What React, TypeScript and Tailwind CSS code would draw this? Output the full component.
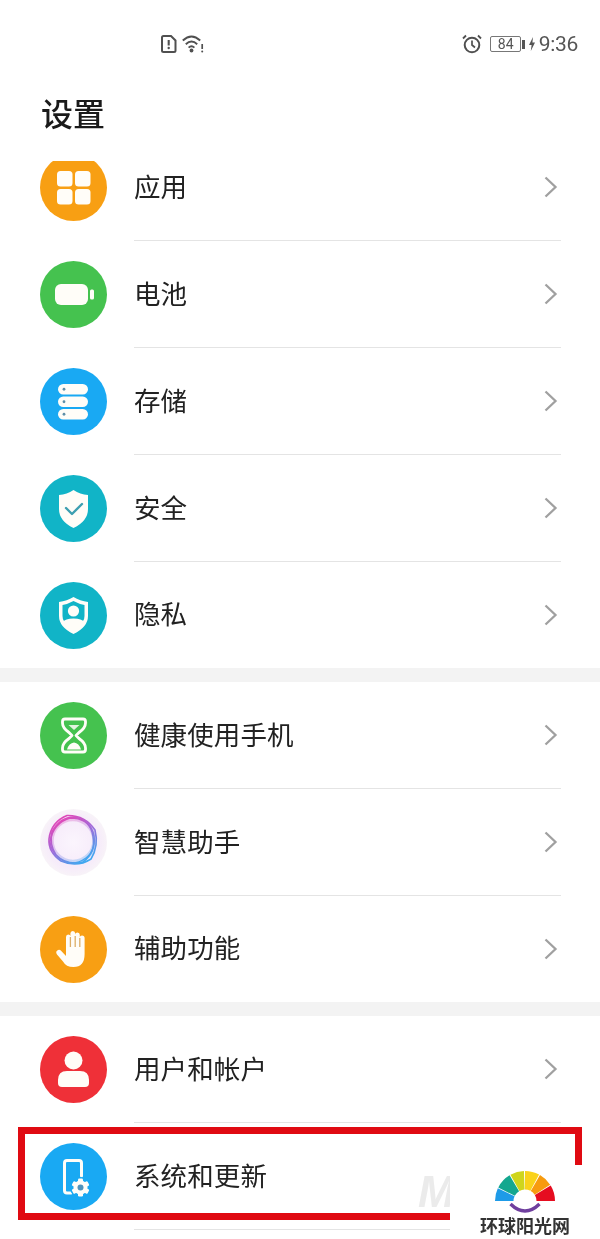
import type { ReactNode } from 'react'

const W = '#fffdf8'

function Circle({ bg, children }: { bg: string; children: ReactNode }) {
  return (
    <svg width="67" height="67" viewBox="0 0 67 67" className="shrink-0">
      <circle cx="33.5" cy="33.5" r="33.5" fill={bg} />
      {children}
    </svg>
  )
}

const AppsIcon = () => (
  <Circle bg="#f89f13">
    <rect x="17" y="17" width="15.5" height="15.5" rx="3.5" fill={W} />
    <rect x="35" y="17" width="15.5" height="15.5" rx="3.5" fill={W} />
    <rect x="17" y="35" width="15.5" height="15.5" rx="3.5" fill={W} />
    <rect x="35" y="35" width="15.5" height="15.5" rx="3.5" fill={W} />
  </Circle>
)

const BatteryIcon = () => (
  <Circle bg="#45c24f">
    <rect x="15" y="23" width="33" height="21" rx="6" fill={W} />
    <rect x="50" y="28.5" width="4" height="10" rx="1.5" fill={W} />
  </Circle>
)

const StorageIcon = () => (
  <Circle bg="#19a9f3">
    {[16, 28.5, 41].map(y => (
      <g key={y}>
        <rect x="18" y={y} width="30" height="10.5" rx="5.25" fill={W} />
        <circle cx="24" cy={y + 5.25} r="1.4" fill="#5f8fa8" />
      </g>
    ))}
  </Circle>
)

const SafetyIcon = () => (
  <Circle bg="#11b4c7">
    <path d="M33.5 15 Q40 19.5 48 20 V34 Q48 46 33.5 53 Q19 46 19 34 V20 Q27 19.5 33.5 15Z" fill={W} />
    <path d="M26 33 L32 39 L42 29" fill="none" stroke="#3d9fb0" strokeWidth="2.4" strokeLinecap="round" strokeLinejoin="round" />
  </Circle>
)

const PrivacyIcon = () => (
  <Circle bg="#11b4c7">
    <path d="M33.5 15 Q40 19 48 20 V34 Q48 45 33.5 52 Q19 45 19 34 V20 Q27 19 33.5 15Z" fill={W} />
    <path d="M33.5 19 Q39 22 44.5 23 V34 Q44.5 37 43 39 L24 39 Q22.5 37 22.5 34 V23 Q28 22 33.5 19Z" fill="#11b4c7" />
    <circle cx="33.5" cy="29" r="5.6" fill={W} />
    <path d="M23 40 Q25 36.5 33.5 36.5 Q42 36.5 44 40 Q41 45 33.5 48.5 Q26 45 23 40Z" fill={W} />
  </Circle>
)

const HourglassIcon = () => (
  <Circle bg="#45c24f">
    <path
      d="M25 17 H43 Q45.5 17 45.5 19.5 V21 Q45.5 26 39 30.5 L36 33.5 L39 36.5 Q45.5 41 45.5 46 V47.5 Q45.5 50 43 50 H25 Q22.5 50 22.5 47.5 V46 Q22.5 41 29 36.5 L32 33.5 L29 30.5 Q22.5 26 22.5 21 V19.5 Q22.5 17 25 17Z"
      fill="none"
      stroke={W}
      strokeWidth="2.8"
      strokeLinejoin="round"
    />
    <path d="M28.5 23 H39.5 L34 28Z" fill={W} opacity="0.85" />
    <path d="M27 47.5 Q29 41 34 40.5 Q39 41 41 47.5Z" fill={W} />
  </Circle>
)

const AssistantIcon = () => (
  <svg width="67" height="67" viewBox="0 0 67 67" className="shrink-0">
    <defs>
      <radialGradient id="asBg">
        <stop offset="0" stopColor="#fbf5fd" />
        <stop offset="0.75" stopColor="#f6ebfa" />
        <stop offset="1" stopColor="#f8f3f8" />
      </radialGradient>
      <linearGradient id="asRing" x1="0.1" y1="0" x2="0.7" y2="1">
        <stop offset="0" stopColor="#ef3fb0" />
        <stop offset="0.5" stopColor="#a468d8" />
        <stop offset="1" stopColor="#40a8f0" />
      </linearGradient>
    </defs>
    <circle cx="33.5" cy="33.5" r="33.5" fill="url(#asBg)" />
    <circle cx="33" cy="31.5" r="21.5" fill="none" stroke="url(#asRing)" strokeWidth="4.5" opacity="0.3" />
    <path d="M9 30 Q11 13 27 6.5 Q45 6 55 21 Q59 37 51 50 Q37 59 21 52 Q8 43 9 30Z" fill="none" stroke="url(#asRing)" strokeWidth="1.6" />
    <path d="M12 23 Q20 8 34 8 Q51 11 54 27 Q56 43 43 53 Q27 57 16 46 Q9 35 12 23Z" fill="none" stroke="url(#asRing)" strokeWidth="1.6" />
    <path d="M10 33 Q13 14 30 9 Q48 9 52 23 Q57 41 46 49 Q32 59 19 49 Q11 42 10 33Z" fill="none" stroke="url(#asRing)" strokeWidth="1.4" />
  </svg>
)

const HandIcon = () => (
  <Circle bg="#f89f13">
    <path
      d="M26 34 V21 Q26 18.5 28.2 18.5 Q30.3 18.5 30.4 20 V17.5 Q30.4 15 32.8 15 Q35.2 15 35.2 17.5 V18.5 Q35.2 16.5 37.5 16.5 Q39.8 16.5 39.8 19 V21.5 Q39.8 19.5 42 19.5 Q44.6 19.5 44.6 22 V38 Q44.6 51 33.5 51 Q26 51 23 45.5 L17 38.5 Q15.3 36 17.3 34.5 Q19.3 33 21.3 35 L26 40 Z"
      fill={W}
    />
    <path d="M30.4 21 V31 M35.2 20 V31 M39.8 22 V31" stroke="#dcae68" strokeWidth="1.3" />
  </Circle>
)

const UserIcon = () => (
  <Circle bg="#ef3038">
    <circle cx="33.5" cy="24.5" r="9" fill={W} />
    <path d="M18 44 Q18 35 27 35 H40 Q49 35 49 44 V47 Q49 51 45 51 H22 Q18 51 18 47Z" fill={W} />
  </Circle>
)

const SystemIcon = () => (
  <Circle bg="#19a9f3">
    <path d="M31 50 H27 Q24.5 50 24.5 47.5 V20 Q24.5 17.5 27 17.5 H39 Q41.5 17.5 41.5 20 V33" fill="none" stroke={W} strokeWidth="3" strokeLinecap="round" />
    <circle cx="40.5" cy="44.5" r="10.5" fill="#19a9f3" />
    {[0, 60, 120].map(a => (
      <rect key={a} x="38" y="35.5" width="5" height="18" rx="1.2" fill={W} transform={`rotate(${a} 40.5 44.5)`} />
    ))}
    <circle cx="40.5" cy="44.5" r="7" fill={W} />
    <circle cx="40.5" cy="44.5" r="3" fill="#4f93bd" />
  </Circle>
)

function Chevron() {
  return (
    <svg width="14" height="22" viewBox="0 0 14 22" className="shrink-0 mr-[-1px]">
      <path d="M1.5 1.5 L11.5 11 L1.5 20.5" fill="none" stroke="#a0a0a0" strokeWidth="2.3" />
    </svg>
  )
}

function Row({ icon, label, divider = true, h = 'h-[107px]' }: { icon: ReactNode; label: string; divider?: boolean; h?: string }) {
  return (
    <div className={`flex items-center pl-10 pr-[39px] ${h}`}>
      {icon}
      <div className={`ml-[27px] flex-1 h-full flex items-center justify-between pr-[4px] border-b ${divider ? 'border-[#e4e4e4]' : 'border-transparent'}`}>
        <span className="mb-[2px] text-[26.5px] leading-none tracking-[0.1px] text-[#222222]">{label}</span>
        <Chevron />
      </div>
    </div>
  )
}

function SimIcon() {
  return (
    <svg width="16" height="18" viewBox="0 0 16 18">
      <path d="M2.5 1 H10 L14.5 5.5 V15.5 Q14.5 17 13 17 H2.5 Q1 17 1 15.5 V2.5 Q1 1 2.5 1Z" fill="none" stroke="#505050" strokeWidth="2" />
      <path d="M7.7 5 V10.5" stroke="#505050" strokeWidth="2.1" />
      <circle cx="7.7" cy="13" r="1.2" fill="#505050" />
    </svg>
  )
}

function WifiIcon() {
  return (
    <svg width="22" height="18" viewBox="0 0 22 18">
      <path d="M0.8 5.5 Q9.5 -2.5 18.2 5.5 M3.8 9.2 Q9.5 3.8 15.2 9.2 M6.6 12.6 Q9.5 10 12.4 12.6" fill="none" stroke="#505050" strokeWidth="1.9" />
      <circle cx="9.5" cy="15.5" r="1.9" fill="#505050" />
      <path d="M20.2 9 V14" stroke="#505050" strokeWidth="1.7" />
      <circle cx="20.2" cy="16.5" r="1" fill="#505050" />
    </svg>
  )
}

function AlarmIcon() {
  return (
    <svg width="20" height="20" viewBox="0 0 20 20">
      <circle cx="10" cy="11" r="7.3" fill="none" stroke="#505050" strokeWidth="2" />
      <path d="M10 6.5 V11 L13 13.5" fill="none" stroke="#505050" strokeWidth="1.7" />
      <path d="M1 4.5 L4 1.5 M19 4.5 L16 1.5" stroke="#505050" strokeWidth="1.8" />
    </svg>
  )
}

function StatusBar() {
  return (
    <div className="h-[88px] flex items-start pt-[35px] pl-[161px] pr-[22px] justify-between">
      <div className="flex items-center gap-[5px]">
        <SimIcon />
        <WifiIcon />
      </div>
      <div className="flex items-center h-[18px] text-[#555555] font-['Roboto',sans-serif]">
        <AlarmIcon />
        <div className="ml-[8px] w-[31px] h-[16px] border border-[#777777] rounded-[2px] text-[14px] leading-[14px] text-center">84</div>
        <div className="ml-[1px] w-[2.5px] h-[9px] bg-[#555555]" />
        <svg width="8" height="14" viewBox="0 0 8 14" className="ml-[3px]">
          <path d="M5 0 L1 8 H3.6 L2.8 14 L7 5.5 H4.4Z" fill="#555555" />
        </svg>
        <span className="ml-[3px] text-[21px] leading-none tracking-[-0.3px]">9:36</span>
      </div>
    </div>
  )
}

function wedge(a0: number, a1: number, r0: number, r1: number) {
  const p = (a: number, r: number) => `${(30 + r * Math.cos((a * Math.PI) / 180)).toFixed(2)} ${(30 - r * Math.sin((a * Math.PI) / 180)).toFixed(2)}`
  return `M${p(a0, r0)} L${p(a0, r1)} A${r1} ${r1} 0 0 1 ${p(a1, r1)} L${p(a1, r0)} A${r0} ${r0} 0 0 0 ${p(a0, r0)}Z`
}

function Watermark() {
  const segs: [number, number, string][] = [
    [180, 155, '#1e9be8'],
    [153, 121, '#14a78f'],
    [119, 92, '#cfd51c'],
    [90, 62, '#fad21a'],
    [60, 33, '#f79b0f'],
    [31, 0, '#e60d20'],
  ]
  return (
    <div className="absolute left-[450px] top-[1165px] w-[150px] h-[74px] bg-white flex flex-col items-center">
      <svg width="62" height="48" viewBox="0 0 62 48" className="mt-[6px] ml-[-1px]">
        <g transform="translate(1 0)">
          {segs.map(([a, b, c]) => (
            <path key={c} d={wedge(a, b, 11.5, 30)} fill={c} />
          ))}
          <path d="M15.5 33 Q30 47 44.5 33" fill="none" stroke="#6f3f9e" strokeWidth="3.4" />
        </g>
      </svg>
      <span className="mt-[-3px] text-[18px] leading-none font-bold text-[#333333] whitespace-nowrap">环球阳光网</span>
    </div>
  )
}

export default function App() {
  return (
    <div className="relative w-[600px] h-[1239px] overflow-hidden bg-white font-['Noto_Sans_CJK_SC',sans-serif] blur-[0.4px]">
      <StatusBar />
      <div className="h-[73px] pl-[41px]">
        <h1 className="text-[32px] leading-[48px] font-medium text-[#1a1a1a]">设置</h1>
      </div>
      <div className="h-[1078px] overflow-hidden">
        <div className="mt-[-27px]">
          <Row icon={<AppsIcon />} label="应用" />
          <Row icon={<BatteryIcon />} label="电池" />
          <Row icon={<StorageIcon />} label="存储" />
          <Row icon={<SafetyIcon />} label="安全" />
          <Row icon={<PrivacyIcon />} label="隐私" divider={false} h="h-[106px]" />
          <div className="h-[14px] bg-[#f3f3f3]" />
          <Row icon={<HourglassIcon />} label="健康使用手机" />
          <Row icon={<AssistantIcon />} label="智慧助手" />
          <Row icon={<HandIcon />} label="辅助功能" divider={false} h="h-[106px]" />
          <div className="h-[14px] bg-[#f3f3f3]" />
          <Row icon={<UserIcon />} label="用户和帐户" />
          <Row icon={<SystemIcon />} label="系统和更新" />
        </div>
      </div>
      <div className="absolute left-[18px] top-[1127px] w-[564px] h-[93px] border-[7px] border-[#e00a12]" />
      <span className="absolute left-[418px] top-[1170px] text-[44px] leading-none italic font-bold text-[#ebebeb] font-['Liberation_Sans',sans-serif]">M</span>
      <Watermark />
    </div>
  )
}
